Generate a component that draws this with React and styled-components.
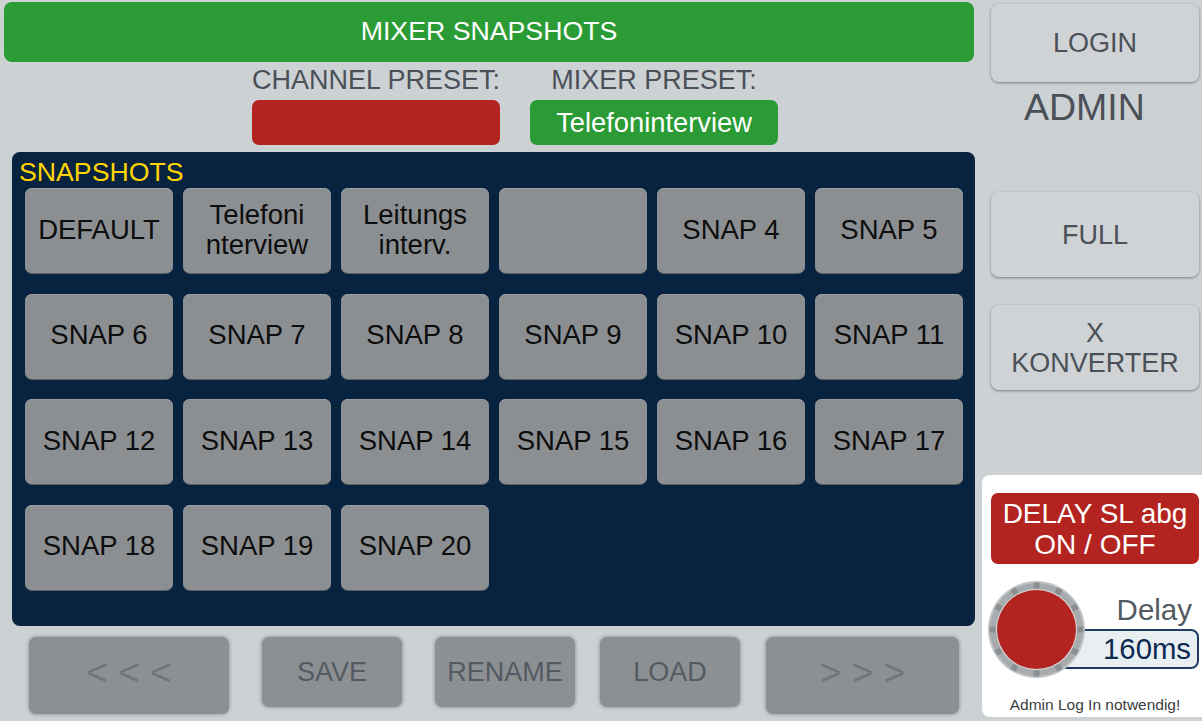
import React from 'react';
import styled, { createGlobalStyle } from 'styled-components';

const GlobalStyle = createGlobalStyle`
    html, body {
        margin: 0;
        padding: 0;
        background: #ccd1d4;
    }
    * {
        box-sizing: border-box;
    }
`;

const snaps = [
    ['DEFAULT'],
    ['Telefoni', 'nterview'],
    ['Leitungs', 'interv.'],
    [''],
    ...Array.from({ length: 17 }, (_, i) => [`SNAP ${i + 4}`]),
];

const ticks = Array.from({ length: 12 }, (_, i) => i * 30);

const Knob = () => (
    <KnobSvg width="97" height="97" viewBox="0 0 97 97">
        <circle cx="48.5" cy="48.5" r="48.5" fill="#c2c5c7" />
        <circle cx="48.5" cy="48.5" r="46.5" fill="#a8abad" />
        {ticks.map((a) => (
            <rect
                key={a}
                x="45.5"
                y="1.5"
                width="6"
                height="6"
                fill="#8c8f92"
                transform={`rotate(${a} 48.5 48.5)`}
            />
        ))}
        <circle cx="48.5" cy="48.5" r="40.5" fill="#d6d7d8" />
        <circle cx="48.5" cy="48.5" r="39.5" fill="#b32421" />
    </KnobSvg>
);

const App = () => {
    return (
        <>
            <GlobalStyle />
            <Screen>
                <LeftColumn>
                    <TopBar>MIXER SNAPSHOTS</TopBar>
                    <PresetRow>
                        <PresetGroup>
                            <PresetLabel>CHANNEL PRESET:</PresetLabel>
                            <PresetBox $color="#b32421"></PresetBox>
                        </PresetGroup>
                        <PresetGroup>
                            <PresetLabel>MIXER PRESET:</PresetLabel>
                            <PresetBox $color="#2b9c35">Telefoninterview</PresetBox>
                        </PresetGroup>
                    </PresetRow>
                    <SnapPanel>
                        <PanelTitle>SNAPSHOTS</PanelTitle>
                        <SnapGrid>
                            {snaps.map((lines, i) => (
                                <SnapButton key={i}>
                                    {lines.map((l, j) => (
                                        <span key={j}>{l}</span>
                                    ))}
                                </SnapButton>
                            ))}
                        </SnapGrid>
                    </SnapPanel>
                    <BottomRow>
                        <BottomButton $w={200} $h={77} $gap={29} $arrow>&lt; &lt; &lt;</BottomButton>
                        <BottomButton $w={140} $h={70} $gap={33}>SAVE</BottomButton>
                        <BottomButton $w={140} $h={70} $gap={33}>RENAME</BottomButton>
                        <BottomButton $w={140} $h={70} $gap={25}>LOAD</BottomButton>
                        <BottomButton $w={193} $h={77} $gap={26} $arrow>&gt; &gt; &gt;</BottomButton>
                    </BottomRow>
                </LeftColumn>
                <RightColumn>
                    <SideButton $h={78} $top={4}>LOGIN</SideButton>
                    <AdminLabel>ADMIN</AdminLabel>
                    <SideButton $h={85} $top={65}>FULL</SideButton>
                    <SideButton $h={85} $top={28}>
                        <span>X</span>
                        <span>KONVERTER</span>
                    </SideButton>
                    <DelayPanel>
                        <DelayButton>
                            <span>DELAY SL abg</span>
                            <span>ON / OFF</span>
                        </DelayButton>
                        <KnobRow>
                            <Knob />
                            <Readout>
                                <ReadoutLabel>Delay</ReadoutLabel>
                                <ReadoutValue>160ms</ReadoutValue>
                            </Readout>
                        </KnobRow>
                        <AdminNote>Admin Log In notwendig!</AdminNote>
                    </DelayPanel>
                </RightColumn>
            </Screen>
        </>
    );
};

export default App;

const Screen = styled.div`
    width: 1202px;
    height: 721px;
    overflow: hidden;
    display: grid;
    grid-template-columns: 982px 220px;
    background: #ccd1d4;
    font-family: "Liberation Sans", Arial, sans-serif;
`;

const LeftColumn = styled.div`
    display: flex;
    flex-direction: column;
`;

const TopBar = styled.div`
    margin: 2px 0 0 4px;
    width: 970px;
    height: 60px;
    border-radius: 8px;
    background: #2b9c35;
    color: #ffffff;
    font-size: 26.7px;
    display: flex;
    align-items: center;
    justify-content: center;
    padding-bottom: 2px;
`;

const PresetRow = styled.div`
    display: flex;
    gap: 30px;
    padding-left: 252px;
    height: 90px;
`;

const PresetGroup = styled.div`
    width: 248px;
    display: flex;
    flex-direction: column;
`;

const PresetLabel = styled.div`
    height: 38px;
    line-height: 36px;
    text-align: center;
    font-size: 27px;
    color: #4b5058;
    white-space: nowrap;
`;

const PresetBox = styled.div`
    height: 45px;
    border-radius: 7px;
    background: ${(p) => p.$color};
    color: #ffffff;
    font-size: 27.3px;
    display: flex;
    align-items: center;
    justify-content: center;
`;

const SnapPanel = styled.div`
    margin-left: 12px;
    width: 963px;
    height: 474px;
    border-radius: 8px;
    background: #08233f;
    padding: 4px 0 0 13px;
`;

const PanelTitle = styled.div`
    height: 32px;
    line-height: 32px;
    margin-left: -6px;
    font-size: 26.7px;
    color: #ffd500;
`;

const SnapGrid = styled.div`
    display: grid;
    grid-template-columns: repeat(6, 148px);
    grid-auto-rows: 85px;
    column-gap: 10px;
    row-gap: 20.5px;
`;

const SnapButton = styled.div`
    border-radius: 7px;
    background: #8c8f92;
    box-shadow: inset 0 1px 0 #9a9da0, 0 1px 0 #5c6166;
    color: #0d0d0d;
    font-size: 27.5px;
    line-height: 30px;
    padding-bottom: 2px;
    display: flex;
    flex-direction: column;
    align-items: center;
    justify-content: center;
`;

const BottomRow = styled.div`
    display: flex;
    align-items: flex-start;
    margin-top: 11px;
`;

const BottomButton = styled.div`
    flex: none;
    width: ${(p) => p.$w}px;
    height: ${(p) => p.$h}px;
    margin-left: ${(p) => p.$gap}px;
    border-radius: 7px;
    background: #8c9093;
    box-shadow: 0 0 4px rgba(0, 0, 0, 0.35);
    color: ${(p) => (p.$arrow ? '#6d767c' : '#535a61')};
    font-size: ${(p) => (p.$arrow ? '37px' : '27px')};
    display: flex;
    align-items: center;
    justify-content: center;
    padding-bottom: ${(p) => (p.$arrow ? '6px' : '0')};
`;

const RightColumn = styled.div`
    display: flex;
    flex-direction: column;
`;

const SideButton = styled.div`
    margin: ${(p) => p.$top}px 0 0 9px;
    width: 208px;
    height: ${(p) => p.$h}px;
    border-radius: 8px;
    background: #cfd3d6;
    box-shadow: 0 1px 3px rgba(0, 0, 0, 0.4);
    color: #4b5058;
    font-size: 27px;
    line-height: 30px;
    display: flex;
    flex-direction: column;
    align-items: center;
    justify-content: center;
`;

const AdminLabel = styled.div`
    margin: 5px 0 0 42px;
    height: 40px;
    line-height: 40px;
    font-size: 37.5px;
    color: #4b5058;
`;

const DelayPanel = styled.div`
    margin-top: 85px;
    height: 242px;
    border-radius: 8px 0 0 8px;
    background: #ffffff;
    padding: 18px 3px 0 9px;
    display: flex;
    flex-direction: column;
`;

const DelayButton = styled.div`
    height: 71px;
    border-radius: 7px;
    background: #b32421;
    color: #ffffff;
    font-size: 28px;
    line-height: 31px;
    display: flex;
    flex-direction: column;
    align-items: center;
    justify-content: center;
`;

const KnobRow = styled.div`
    margin: 17px 0 0 -3px;
    height: 97px;
    display: flex;
`;

const KnobSvg = styled.svg`
    flex: none;
    position: relative;
    z-index: 1;
    display: block;
`;

const Readout = styled.div`
    flex: 1;
    margin-left: -50px;
    display: flex;
    flex-direction: column;
    align-items: stretch;
`;

const ReadoutLabel = styled.div`
    height: 48px;
    display: flex;
    align-items: flex-end;
    justify-content: flex-end;
    padding: 0 7px 4px 0;
    line-height: 30px;
    font-size: 29.5px;
    color: #525b63;
`;

const ReadoutValue = styled.div`
    height: 40px;
    border: 2px solid #1f3d63;
    border-radius: 0 8px 8px 0;
    background: #e9eef1;
    color: #0c2a4f;
    font-size: 29.3px;
    display: flex;
    align-items: center;
    justify-content: flex-end;
    padding-right: 6px;
`;

const AdminNote = styled.div`
    margin-top: 18px;
    line-height: 18px;
    text-align: center;
    font-size: 15.5px;
    color: #3a3d40;
`;
